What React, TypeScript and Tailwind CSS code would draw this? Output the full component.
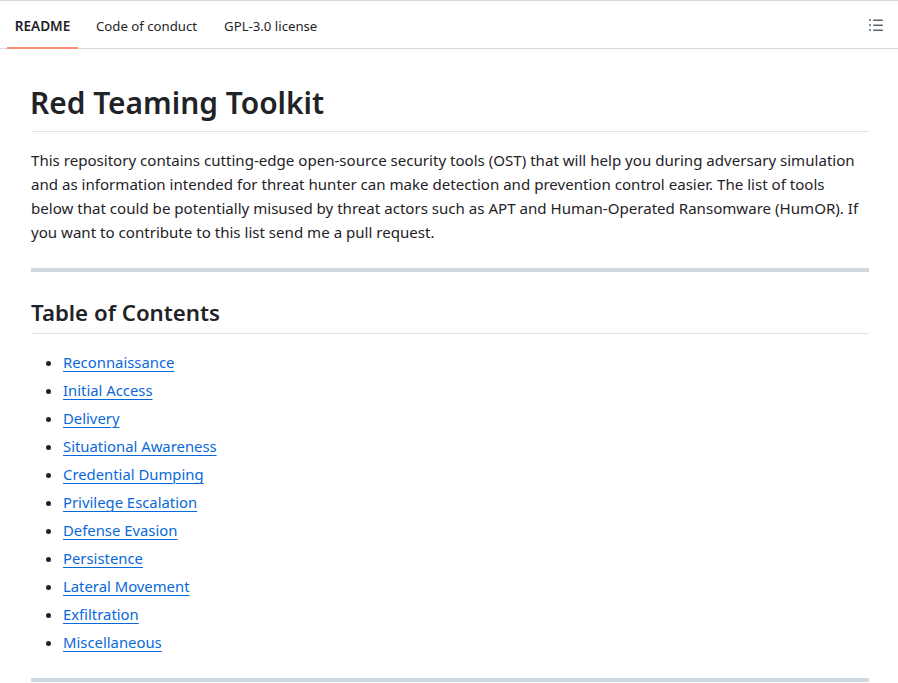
const links = ["Reconnaissance","Initial Access","Delivery","Situational Awareness","Credential Dumping","Privilege Escalation","Defense Evasion","Persistence","Lateral Movement","Exfiltration","Miscellaneous"];

export default function App() {
  return (
    <div className="h-[683px] overflow-hidden bg-white text-[#1f2328] font-['Noto_Sans','Open_Sans',sans-serif]">
      <nav className="flex h-[49px] items-stretch justify-between border-y border-[#d1d9e0] pl-[7px] pr-[14px]">
        <div className="flex items-stretch text-[13.2px]">
          <a className="relative flex w-[71px] items-center justify-center pt-[3px] text-[13.6px] font-semibold">
            README
            <span className="absolute inset-x-0 bottom-[-1px] h-[2px] bg-[#fd8c73]" />
          </a>
          <a className="ml-[18px] flex items-center pt-[4px]">Code of conduct</a>
          <a className="ml-[27px] flex items-center pt-[4px]">GPL-3.0 license</a>
        </div>
        <div className="flex items-center">
          <svg width="16" height="16" viewBox="0 0 16 16" fill="#59636e">
            <path d="M5.75 2.5h8.5a.75.75 0 0 1 0 1.5h-8.5a.75.75 0 0 1 0-1.5Zm0 5h8.5a.75.75 0 0 1 0 1.5h-8.5a.75.75 0 0 1 0-1.5Zm0 5h8.5a.75.75 0 0 1 0 1.5h-8.5a.75.75 0 0 1 0-1.5ZM2 14a1 1 0 1 1 0-2 1 1 0 0 1 0 2Zm1-6a1 1 0 1 1-2 0 1 1 0 0 1 2 0ZM2 4a1 1 0 1 1 0-2 1 1 0 0 1 0 2Z" />
          </svg>
        </div>
      </nav>
      <main className="pl-[31px] pr-[29px] pt-[33px]">
        <h1 className="-ml-px text-[29.9px] leading-[42px] font-semibold">Red Teaming Toolkit</h1>
        <div className="mt-[7px] h-px bg-[#d1d9e0b3]" />
        <p className="mt-4 text-[15.08px] leading-6">
          This repository contains cutting-edge open-source security tools (OST) that will help you during adversary simulation and as information intended for threat hunter can make detection and prevention control easier. The list of tools below that could be potentially misused by threat actors such as APT and Human-Operated Ransomware (HumOR). If you want to contribute to this list send me a pull request.
        </p>
        <hr className="mt-6 h-1 border-0 bg-[#d1d9e0]" />
        <h2 className="mt-[26px] border-b border-[#d1d9e0b3] pb-[5px] text-[22.25px] leading-[30px] font-semibold">Table of Contents</h2>
        <ul className="mt-4 list-disc pl-8 text-[14.85px]">
          {links.map((l, i) => (
            <li key={l} className={`leading-6 ${i ? "mt-1" : ""}`}>
              <a className="text-[#0969da] underline decoration-1 underline-offset-[3px]">{l}</a>
            </li>
          ))}
        </ul>
        <hr className="mt-6 h-1 border-0 bg-[#d1d9e0]" />
      </main>
    </div>
  );
}
